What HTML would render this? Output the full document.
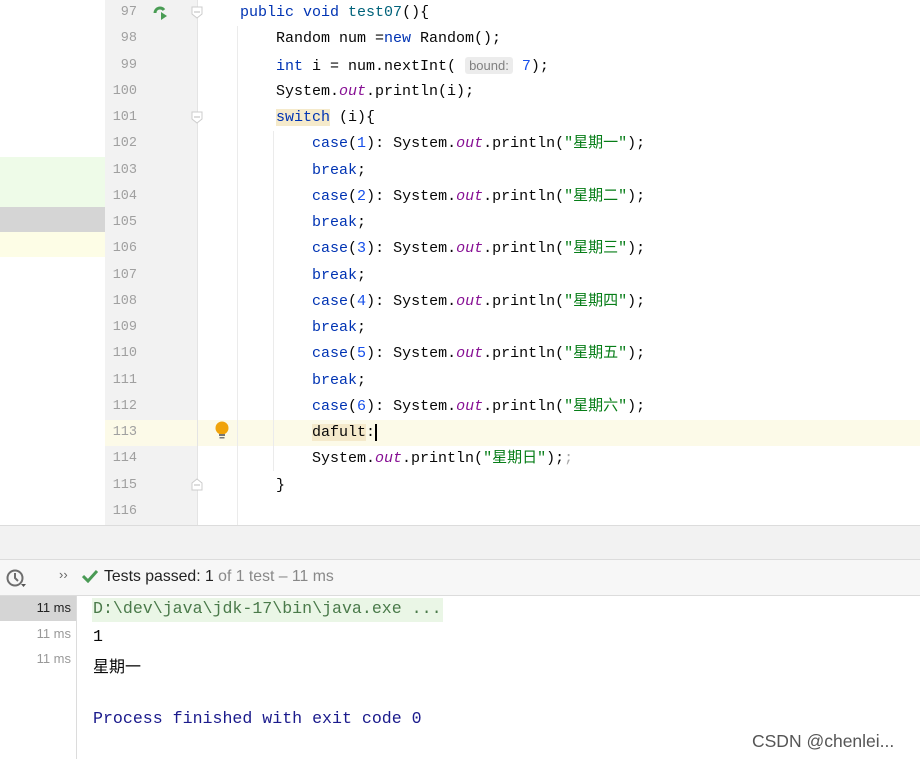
<!DOCTYPE html>
<html><head><meta charset="utf-8"><style>
*{margin:0;padding:0;box-sizing:border-box}
body{width:920px;height:759px;background:#fff;position:relative;overflow:hidden;font-family:"Liberation Mono","Noto Sans CJK SC",monospace}
.abs{position:absolute}
.ln{position:absolute;left:105px;width:32px;text-align:right;color:#a0a0a0;font-size:13.5px;height:26.25px;line-height:26.25px}
.cl{position:absolute;left:240px;font-size:15px;height:26.25px;line-height:26.25px;color:#080808;white-space:pre}
.k{color:#0033b3}.o{color:#871094;font-style:italic}.s{color:#067d17}.n{color:#1750eb}
.hint{background:#ececec;color:#808080;font-family:"Liberation Sans",sans-serif;font-size:13px;padding:1px 4px;border-radius:3px}
</style></head><body>
<div class="abs" style="left:0;top:157px;width:105px;height:50px;background:#eefbe8"></div>
<div class="abs" style="left:0;top:207px;width:105px;height:25px;background:#d5d5d5"></div>
<div class="abs" style="left:0;top:232px;width:105px;height:25px;background:#fdfde6"></div>
<div class="abs" style="left:105px;top:0;width:92px;height:525px;background:#f2f2f2"></div>
<div class="abs" style="left:197px;top:0;width:1px;height:525px;background:#e4e4e4"></div>
<div class="abs" style="left:105px;top:420px;width:815px;height:26px;background:#fcfae8"></div>
<div class="abs" style="left:197px;top:420px;width:1px;height:26px;background:#e4e4e4"></div>
<div class="abs" style="left:237px;top:26px;width:1px;height:499px;background:#ebebeb"></div>
<div class="abs" style="left:273px;top:131px;width:1px;height:340px;background:#ebebeb"></div>
<svg class="abs" style="left:152px;top:4px" width="18" height="18"><path d="M3 9a5 5 0 0 1 9-3" stroke="#499c54" stroke-width="3" fill="none"/><path d="M9 8l6 4-6 4z" fill="#499c54"/></svg>
<svg class="abs" style="left:191px;top:6px" width="12" height="14"><path d="M1 1h10v7l-5 4-5-4z" fill="#fff" stroke="#ccc"/><path d="M3 6h6" stroke="#bbb"/></svg>
<svg class="abs" style="left:191px;top:111px" width="12" height="14"><path d="M1 1h10v7l-5 4-5-4z" fill="#fff" stroke="#ccc"/><path d="M3 6h6" stroke="#bbb"/></svg>
<svg class="abs" style="left:191px;top:477px" width="12" height="14"><path d="M1 13h10V6L6 2 1 6z" fill="#fff" stroke="#ccc"/><path d="M3 8h6" stroke="#bbb"/></svg>
<svg class="abs" style="left:214px;top:420px" width="16" height="20"><circle cx="8" cy="8" r="6.5" fill="#f0a30a"/><rect x="5" y="14" width="6" height="2" fill="#777"/><rect x="5.5" y="17" width="5" height="1.5" fill="#777"/></svg>

<div class="ln" style="top:0">97</div><div class="ln" style="top:26.25px">98</div><div class="ln" style="top:52.5px">99</div><div class="ln" style="top:78.75px">100</div><div class="ln" style="top:105px">101</div><div class="ln" style="top:131.25px">102</div><div class="ln" style="top:157.5px">103</div><div class="ln" style="top:183.75px">104</div><div class="ln" style="top:210px">105</div><div class="ln" style="top:236.25px">106</div><div class="ln" style="top:262.5px">107</div><div class="ln" style="top:288.75px">108</div><div class="ln" style="top:315px">109</div><div class="ln" style="top:341.25px">110</div><div class="ln" style="top:367.5px">111</div><div class="ln" style="top:393.75px">112</div><div class="ln" style="top:420px">113</div><div class="ln" style="top:446.25px">114</div><div class="ln" style="top:472.5px">115</div><div class="ln" style="top:498.75px">116</div>

<div class="cl" style="top:0"><span class="k">public void</span> <span style="color:#00627a">test07</span>(){</div>
<div class="cl" style="top:26.25px">    Random num =<span class="k">new</span> Random();</div>
<div class="cl" style="top:52.5px">    <span class="k">int</span> i = num.nextInt( <span class="hint">bound:</span> <span class="n">7</span>);</div>
<div class="cl" style="top:78.75px">    System.<span class="o">out</span>.println(i);</div>
<div class="cl" style="top:105px">    <span class="k" style="background:#f5eacb">switch</span> (i){</div>
<div class="cl" style="top:131.25px">        <span class="k">case</span>(<span class="n">1</span>): System.<span class="o">out</span>.println(<span class="s">"星期一"</span>);</div>
<div class="cl" style="top:157.5px">        <span class="k">break</span>;</div>
<div class="cl" style="top:183.75px">        <span class="k">case</span>(<span class="n">2</span>): System.<span class="o">out</span>.println(<span class="s">"星期二"</span>);</div>
<div class="cl" style="top:210px">        <span class="k">break</span>;</div>
<div class="cl" style="top:236.25px">        <span class="k">case</span>(<span class="n">3</span>): System.<span class="o">out</span>.println(<span class="s">"星期三"</span>);</div>
<div class="cl" style="top:262.5px">        <span class="k">break</span>;</div>
<div class="cl" style="top:288.75px">        <span class="k">case</span>(<span class="n">4</span>): System.<span class="o">out</span>.println(<span class="s">"星期四"</span>);</div>
<div class="cl" style="top:315px">        <span class="k">break</span>;</div>
<div class="cl" style="top:341.25px">        <span class="k">case</span>(<span class="n">5</span>): System.<span class="o">out</span>.println(<span class="s">"星期五"</span>);</div>
<div class="cl" style="top:367.5px">        <span class="k">break</span>;</div>
<div class="cl" style="top:393.75px">        <span class="k">case</span>(<span class="n">6</span>): System.<span class="o">out</span>.println(<span class="s">"星期六"</span>);</div>
<div class="cl" style="top:420px">        <span style="background:#f5eacb">dafult</span>:<span style="border-left:2px solid #000"></span></div>
<div class="cl" style="top:446.25px">        System.<span class="o">out</span>.println(<span class="s">"星期日"</span>);<span style="color:#aaa">;</span></div>
<div class="cl" style="top:472.5px">    }</div>

<div class="abs" style="left:0;top:525px;width:920px;height:1px;background:#dcdcdc"></div>
<div class="abs" style="left:0;top:526px;width:920px;height:33px;background:#f2f2f2"></div>
<div class="abs" style="left:0;top:559px;width:920px;height:1px;background:#dcdcdc"></div>
<div class="abs" style="left:0;top:560px;width:920px;height:35px;background:#f7f7f7"></div>
<div class="abs" style="left:0;top:595px;width:920px;height:1px;background:#dcdcdc"></div>
<svg class="abs" style="left:5px;top:568px" width="22" height="22"><circle cx="10" cy="10" r="7.5" stroke="#6e6e6e" stroke-width="2" fill="none"/><path d="M10 5v5l3 3" stroke="#6e6e6e" stroke-width="2" fill="none"/><path d="M16 16l5 0-2.5 3z" fill="#555"/></svg>
<div class="abs" style="left:59px;top:567px;font-family:'Liberation Sans';font-size:13px;color:#666">››</div>
<svg class="abs" style="left:82px;top:569px" width="16" height="14"><path d="M1 7l5 5 9-10" stroke="#4a9a55" stroke-width="3" fill="none"/></svg>
<div class="abs" style="left:104px;top:568px;font-family:'Liberation Sans',sans-serif;font-size:15.8px;color:#222">Tests passed: 1 <span style="color:#888">of 1 test – 11 ms</span></div>

<div class="abs" style="left:0;top:596px;width:76px;height:25px;background:#d5d5d5"></div>
<div class="abs" style="left:76px;top:596px;width:1px;height:163px;background:#dcdcdc"></div>
<div class="abs" style="left:0;top:600px;width:71px;text-align:right;font-family:'Liberation Sans';font-size:13px;color:#222">11 ms</div>
<div class="abs" style="left:0;top:626px;width:71px;text-align:right;font-family:'Liberation Sans';font-size:13px;color:#999">11 ms</div>
<div class="abs" style="left:0;top:651px;width:71px;text-align:right;font-family:'Liberation Sans';font-size:13px;color:#999">11 ms</div>
<div class="abs" style="left:92px;top:598px;width:351px;height:24px;background:#eaf6e6"></div>
<div class="abs" style="left:93px;top:599px;font-size:16.6px;color:#4a7a4a;white-space:pre">D:\dev\java\jdk-17\bin\java.exe ...</div>
<div class="abs" style="left:93px;top:627px;font-size:16.6px;color:#080808">1</div>
<div class="abs" style="left:93px;top:653px;font-size:16px;color:#080808">星期一</div>
<div class="abs" style="left:93px;top:709px;font-size:16.6px;color:#1a1a8c;white-space:pre">Process finished with exit code 0</div>
<div class="abs" style="left:752px;top:731px;font-family:'Liberation Sans',sans-serif;font-size:17.5px;color:#555">CSDN @chenlei...</div>
</body></html>
